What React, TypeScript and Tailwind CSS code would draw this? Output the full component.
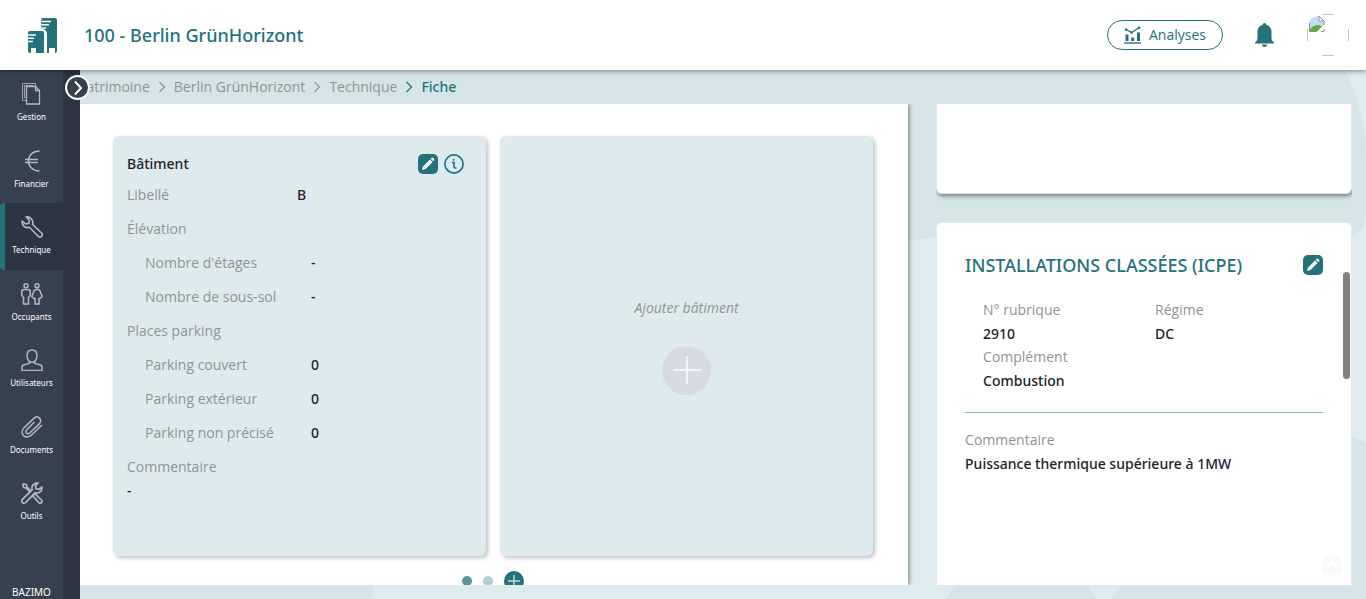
import type { ReactNode } from 'react';

const Svg = ({ children, box = '0 0 22 22', className = 'size-[22px]' }: { children: ReactNode; box?: string; className?: string }) => (
  <svg viewBox={box} className={className} fill="none" stroke="currentColor" aria-hidden="true">
    {children}
  </svg>
);

const WRENCH =
  'M1.2 5.2a5.600 5.600 0 0 0 7.300 6.100l8.700 9a2.300 2.300 0 0 0 3.400-3.300L11.500 8.300A5.600 5.600 0 0 0 5.300 1l3 3.200-.5 3-3.200.6z';

const icons: Record<string, ReactNode> = {
  Gestion: (
    <Svg>
      <path d="M5.500 17.500h-4v-17h13v3M3.500 15.500v-13h9" strokeWidth=".8" />
      <path d="M5.500 3.500h9l4 4v13.500h-13zM14.500 3.500v4h4" strokeWidth="1.300" />
    </Svg>
  ),
  Financier: (
    <Svg>
      <path d="M18.500 1c-7 0-11 4.500-11 10s4 10 11 10M4 9.500h13M4 12.500h13" strokeWidth="1.500" />
    </Svg>
  ),
  Technique: (
    <Svg>
      <path d={WRENCH} strokeWidth="1.600" />
    </Svg>
  ),
  Occupants: (
    <Svg>
      <g strokeWidth="1.500">
        <circle cx="5" cy="2.800" r="2" />
        <path d="M3 6.500h4c1.500 0 2.200 1 2.200 2.500v3.500L7.500 14.500v6.500h-5v-6.500L.8 12.500V9C.8 7.500 1.500 6.500 3 6.500z" />
        <circle cx="16" cy="2.800" r="2" />
        <path d="M14.500 6.500h3l1.500 1.500 2.200 5.500-2.200 2h-1v5.500h-4v-5.500h-1l-2.200-2L13 8z" />
      </g>
    </Svg>
  ),
  Utilisateurs: (
    <Svg>
      <path d="M6 6.500C6 3 8 1 11 1s5 2 5 5.500-2 6.800-5 6.800-5-3.300-5-6.800zM8.500 12.500v1.800l-6 1.700c-1 .3-1.500 1-1.500 2v3.500h20V18c0-1-.5-1.700-1.500-2l-6-1.700v-1.800" strokeWidth="1.500" />
    </Svg>
  ),
  Documents: (
    <Svg>
      <path d="M21 9 10.500 19c-2.600 2.600-6 2.600-8 .6s-2-5.300.6-7.900L12.500 2.600c2-2 4.500-2 6-.5s1.500 4-.5 6l-9 8.700c-1.200 1.200-2.600 1.200-3.500.3s-.9-2.200.3-3.400L13.500 6" strokeWidth="1.500" />
    </Svg>
  ),
  Outils: (
    <Svg>
      <g strokeWidth="1.700">
        <path d="M20.800 5.200a5 5 0 0 1-6.600 5.600l-9.600 9.700a2.200 2.200 0 0 1-3.200-3.100l9.800-9.600A5 5 0 0 1 16.800 1.200L14.500 3.800l.5 3 3 .5z" />
        <path d="m2 1.500 3.500 1.300L6 5l4 4M1.500 2l1.300 3.500L5 6l4 4M12.500 12.500l1.500-.5 6.500 6a1.800 1.800 0 0 1-2.600 2.600l-6-6.500z" />
      </g>
    </Svg>
  ),
};

const Pencil = () => (
  <svg viewBox="0 0 20 20" className="size-5" fill="currentColor" aria-hidden="true">
    <path d="m4 16 1-3.500 7-7 2.500 2.500-7 7zM12.700 4.800l1-1a1 1 0 0 1 1.400 0l1.100 1.100a1 1 0 0 1 0 1.400l-1 1z" />
  </svg>
);

const EditButton = () => (
  <button type="button" aria-label="Modifier" className="size-5 shrink-0 rounded-[5px] bg-[#23727c] text-white">
    <Pencil />
  </button>
);

const NavItem = ({ name, active }: { name: string; active?: boolean }) => (
  <a
    href="#"
    className={`flex flex-col items-center gap-1.5 pt-[13px] text-[8px] leading-3 text-white ${
      active ? 'w-20 rounded-l border-l-[5px] border-[#23727c] bg-[#2c3643] pr-[22px]' : 'w-full'
    }`}
  >
    <span className="text-[#b4b9bf]">{icons[name]}</span>
    {name}
  </a>
);

const Crumb = ({ children }: { children: ReactNode }) => (
  <>
    <a href="#">{children}</a>
    <Svg box="0 0 8 12" className="h-3 w-2">
      <path d="m1.500 1 5 5-5 5" strokeWidth="1.200" />
    </Svg>
  </>
);

const rows: [string, string, boolean][] = [
  ['Libellé', 'B', false],
  ['Élévation', '', false],
  ["Nombre d'étages", '-', true],
  ['Nombre de sous-sol', '-', true],
  ['Places parking', '', false],
  ['Parking couvert', '0', true],
  ['Parking extérieur', '0', true],
  ['Parking non précisé', '0', true],
];

const MEDIUM = "font-['Noto_Sans',sans-serif] font-medium";

const Field = ({ label, value }: { label: string; value: string }) => (
  <div>
    <dt className="leading-6 text-[#8d9496]">{label}</dt>
    <dd className={`leading-[23px] ${MEDIUM}`}>{value}</dd>
  </div>
);

const CARD = 'min-w-0 rounded-md bg-[#deebee] shadow-[2px_2px_4px_rgba(0,0,0,0.25)]';

export default function App() {
  return (
    <div className="flex h-screen flex-col overflow-hidden bg-[#deebef] font-['Open_Sans','Noto_Sans',sans-serif] text-sm text-[#1d2327]">
      <header className="relative z-20 flex h-[70px] shrink-0 items-center bg-white pr-[17px] pl-7 text-[#23727c] shadow-[0_1px_5px_rgba(0,0,0,0.45)]">
        <svg viewBox="0 0 30 36" className="h-9 w-[30px]" aria-label="Bazimo">
          <path fill="#23727c" d="M13 3q0-2 2-2h12q2 0 2 2v31q0 2-2 2v-5h-6v5h-2V17q0-4-4-5h-2zM0 16q0-2 2-2h12q2 0 2 2v20H8v-5H3v5H2q-2 0-2-2z" />
          <path stroke="#fff" strokeWidth="1.500" d="M12 4.500h11M12 7.800h9M12 11h6M0 18h8M0 21.300h6M0 24.500h5" />
        </svg>
        <h1 className={`ml-[26px] flex-1 text-lg ${MEDIUM}`}>100 - Berlin GrünHorizont</h1>
        <button type="button" className="flex h-[30px] w-[116px] items-center justify-center gap-2 rounded-full border border-[#23727c]">
          <svg viewBox="0 0 17 18" className="h-[18px] w-[17px]" fill="none" stroke="currentColor" aria-hidden="true">
            <path d="M0 17h17" strokeWidth="1.400" />
            <path d="M3 8.500V15M8.700 11.500V15M14.500 6.500V15" strokeWidth="3" />
            <path d="m2 3.500 5.500 3 8-5" strokeWidth="1.400" />
            <path d="M2 3.500h.1M7.600 6.500h.1M15 1.800h.1" strokeWidth="2.600" strokeLinecap="round" />
          </svg>
          Analyses
        </button>
        <button type="button" aria-label="Notifications" className="ml-8">
          <svg viewBox="0 0 19 24" className="h-6 w-[19px]" fill="currentColor" aria-hidden="true">
            <path d="M9.500 0c1 0 1.700.7 1.700 1.800 3.500.8 5.300 3.500 5.300 7v6.200c0 2 .8 2.900 2.500 4.500v1H0v-1c1.700-1.600 2.500-2.500 2.500-4.500V8.800c0-3.500 1.800-6.200 5.300-7C7.800.7 8.500 0 9.500 0zM7 21.500h5c0 1.500-1 2.500-2.500 2.500S7 23 7 21.500z" />
          </svg>
        </button>
        <svg viewBox="0 0 42 42" className="ml-[33px] size-[42px]" role="img" aria-label="Avatar">
          <path d="M15 .5h12M15 41.500h12M.5 15v12M41.500 15v12" stroke="#c4c4c4" />
          <path d="M2 9q1-5 5-6l4-1 1 5 5 1v3l-6 4H2z" fill="#c8d8f8" />
          <path d="M2 17c2-4 6-6 9-6l4 1-4 5z" fill="#58b034" />
          <path d="M12 2v5h5M12 2l5 5v4M2.500 9v8.500H10M14 17.500h3V15" fill="none" stroke="#8c8c8c" />
          <path d="m10 18 8-7v2l-5 5z" fill="#fff" />
        </svg>
      </header>

      <div className="relative flex min-h-0 flex-1">
        <svg className="absolute inset-0 size-full" viewBox="0 0 1366 529" preserveAspectRatio="none" aria-hidden="true">
          <path fill="#d5e4e7" d="M0 0h1345c14 28 21 60 21 98v42c0 12-6 21-14 28C1200 190 1060 150 936 167l-28 4L0 250z" />
          <path fill="#d5e4e7" d="M0 400h420c-20 30-40 70-49 129H0zM947 529c2-6 5-10 8-14h132l10 14zM1112 529l10-14 150-149h80l14 7v156z" />
        </svg>

        <nav className="relative z-10 flex w-20 shrink-0 flex-col bg-[#2c3643] font-['Noto_Sans',sans-serif]">
          <div className="flex w-[63px] flex-1 flex-col bg-[#36414e]">
            <div className="grid h-[466px] auto-rows-fr grid-cols-1">
              {Object.keys(icons).map((name) => (
                <NavItem key={name} name={name} active={name === 'Technique'} />
              ))}
            </div>
            <span className="mt-auto text-center text-[10px] leading-[14px] text-white">BAZIMO</span>
          </div>
          <button
            type="button"
            aria-label="Déplier le menu"
            className="absolute top-[5px] -right-2.5 flex size-[25px] items-center justify-center rounded-full border-2 border-white bg-[#36414e] text-white"
          >
            <Svg box="0 0 10 16" className="h-4 w-2.5">
              <path d="m2 1.500 6 6.500-6 6.500" strokeWidth="2" />
            </Svg>
          </button>
        </nav>

        <main className="relative flex min-w-0 flex-1 flex-col pb-3.5">
          <nav aria-label="Fil d'Ariane" className="-ml-0.5 flex h-[34px] shrink-0 items-center gap-2 text-[#8d9496]">
            <Crumb>Patrimoine</Crumb>
            <Crumb>Berlin GrünHorizont</Crumb>
            <a href="#">Technique</a>
            <span className={`flex items-center gap-2 text-[#23727c] ${MEDIUM}`}>
              <Svg box="0 0 8 12" className="h-3 w-2">
                <path d="m1.500 1 5 5-5 5" strokeWidth="1.200" />
              </Svg>
              Fiche
            </span>
          </nav>

          <div className="flex min-h-0 flex-1 gap-7 overflow-hidden pr-3.5">
            <section className="flex min-h-0 w-[65.1%] shrink-0 flex-col bg-white pt-8 pr-[35px] pl-[33px] shadow-[1px_0_4px_rgba(0,0,0,0.5)]">
              <div className="grid h-[420px] shrink-0 grid-cols-2 gap-3.5">
                <article className={`${CARD} px-3.5 pt-[18px]`}>
                  <div className="flex items-center justify-between pr-2">
                    <h2 className={MEDIUM}>Bâtiment</h2>
                    <div className="flex gap-1.5">
                      <EditButton />
                      <button type="button" aria-label="Informations" className="text-[#23727c]">
                        <Svg box="0 0 20 20" className="size-5">
                          <circle cx="10" cy="10" r="9.100" strokeWidth="1.700" />
                          <path d="M8 8.500h2v4.200q0 1.300 1.300 1.300h1.200" strokeWidth="1.600" />
                          <circle cx="9.700" cy="5.800" r=".6" />
                        </Svg>
                      </button>
                    </div>
                  </div>
                  <dl className="mt-1">
                    {rows.map(([label, value, nested]) => (
                      <div key={label} className={`flex h-[34px] items-center ${nested ? 'pl-[18px]' : ''}`}>
                        <dt className={`text-[#8d9496] ${nested ? 'w-[166px]' : 'w-[170px]'}`}>{label}</dt>
                        <dd className={MEDIUM}>{value}</dd>
                      </div>
                    ))}
                    <div className="pt-[5px]">
                      <Field label="Commentaire" value="-" />
                    </div>
                  </dl>
                </article>
                <article className={`${CARD} flex flex-col items-center pt-[162px]`}>
                  <p className="text-[#8d9496] italic">Ajouter bâtiment</p>
                  <button type="button" aria-label="Ajouter bâtiment" className="mt-7 size-[49px] rounded-full bg-[#d6dae2] text-[#f2f3f5]">
                    <Svg box="0 0 49 49" className="size-[49px]">
                      <path d="M25 10v28M11 24h28" strokeWidth="2" />
                    </Svg>
                  </button>
                </article>
              </div>
              <div className="mt-[15px] flex shrink-0 items-center justify-center gap-[11px]">
                <button type="button" aria-label="Page 1" className="size-2.5 rounded-full bg-[#5b969e]" />
                <button type="button" aria-label="Page 2" className="size-2.5 rounded-full bg-[#b1cbd0]" />
                <button type="button" aria-label="Ajouter" className="size-5 rounded-full bg-[#23727c] text-[#c5dadd]">
                  <Svg box="0 0 20 20" className="size-5">
                    <path d="M10 4v12M4 10h12" strokeWidth="1.500" />
                  </Svg>
                </button>
              </div>
            </section>

            <aside className="relative flex min-h-0 min-w-0 flex-1 flex-col gap-7 overflow-hidden">
              <section className="h-[90px] shrink-0 rounded-b-md border border-t-0 border-[#e3e9eb] bg-white shadow-[1px_2px_4px_rgba(0,0,0,0.45)]" />
              <section className="flex-1 rounded-t-md border border-b-0 border-[#e3e9eb] bg-white px-7 pt-7">
                <div className="flex items-center justify-between">
                  <h2 className={`text-lg text-[#23727c] ${MEDIUM}`}>INSTALLATIONS CLASSÉES (ICPE)</h2>
                  <EditButton />
                </div>
                <dl className="mt-[19px] grid grid-cols-2 gap-x-1 border-b border-[#7fb3bd] pb-5 pl-[18px]">
                  <Field label="N° rubrique" value="2910" />
                  <Field label="Régime" value="DC" />
                  <Field label="Complément" value="Combustion" />
                </dl>
                <dl className="mt-[15px]">
                  <Field label="Commentaire" value="Puissance thermique supérieure à 1MW" />
                </dl>
              </section>
              <div className="absolute top-[168px] right-0.5 h-[107px] w-[7px] rounded-full bg-[#808080]" />
              <button type="button" aria-label="Haut de page" className="absolute right-2.5 bottom-2.5 size-5 rounded-[5px] bg-[#f8fafa] text-white">
                <Svg box="0 0 20 20" className="size-5">
                  <path d="m4 13 6-6 6 6" strokeWidth="2" />
                </Svg>
              </button>
            </aside>
          </div>
        </main>
      </div>
    </div>
  );
}
